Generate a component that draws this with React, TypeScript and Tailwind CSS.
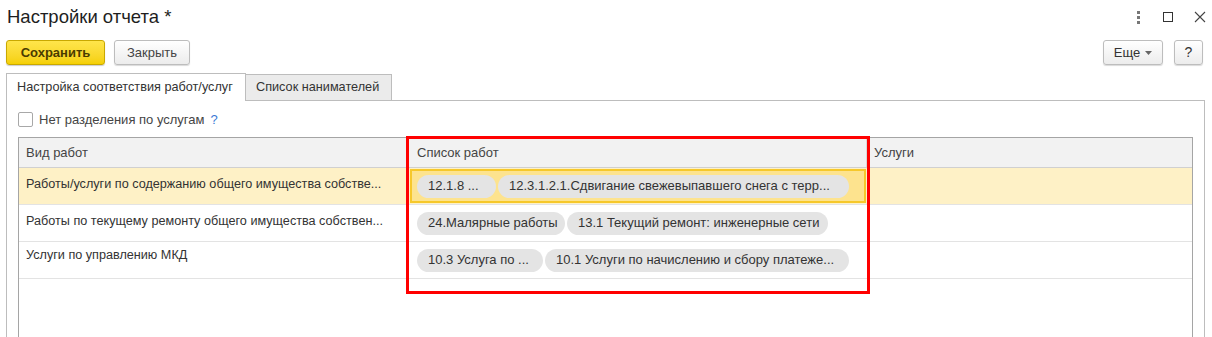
import React from "react";

const Chip = ({ children, w }: { children: React.ReactNode; w: number }) => (
  <div
    className="h-[23px] rounded-full bg-[#e4e4e4] flex items-center pl-[11px] pr-[8px] text-[13px] text-[#333] whitespace-nowrap overflow-hidden shrink-0"
    style={{ width: w }}
  >
    {children}
  </div>
);

export default function App() {
  return (
    <div className="relative w-[1212px] h-[337px] bg-white overflow-hidden text-[#333]" style={{ fontFamily: '"Liberation Sans", Arial, sans-serif' }}>
      {/* title bar */}
      <div className="flex items-center h-[34px] pl-[7px] pr-[4px]">
        <div className="text-[18.5px] text-[#1e1e1e] leading-none">Настройки отчета *</div>
        <div className="ml-auto flex items-center">
          <div className="flex flex-col gap-[2px] items-center w-[4px] mr-[23px]">
            <span className="w-[3px] h-[3px] bg-[#777]" />
            <span className="w-[3px] h-[3px] bg-[#777]" />
            <span className="w-[3px] h-[3px] bg-[#777]" />
          </div>
          <div className="w-[10px] h-[10px] border border-[#333] mr-[21px]" />
          <svg width="12" height="12" viewBox="0 0 12 12" className="mr-[2px]">
            <path d="M1 1L11 11M11 1L1 11" stroke="#444" strokeWidth="1.1" />
          </svg>
        </div>
      </div>
      {/* buttons */}
      <div className="flex items-center h-[25px] mt-[6px] px-[6px]">
        <div className="h-[25px] w-[99px] rounded-[3px] border border-[#c9a800] bg-gradient-to-b from-[#ffe54a] to-[#f5d000] flex items-center justify-center text-[13px] font-bold text-[#4a3b00] shadow-[0_1px_1px_rgba(0,0,0,0.2)]">
          Сохранить
        </div>
        <div className="ml-[9px] h-[25px] w-[76px] rounded-[3px] border border-[#bdbdbd] bg-gradient-to-b from-white to-[#ececec] flex items-center justify-center text-[13px] text-[#444] shadow-[0_1px_1px_rgba(0,0,0,0.15)]">
          Закрыть
        </div>
        <div className="ml-auto h-[25px] w-[60px] rounded-[3px] border border-[#bdbdbd] bg-gradient-to-b from-white to-[#ececec] flex items-center justify-center gap-[5px] text-[13px] text-[#333] shadow-[0_1px_1px_rgba(0,0,0,0.15)]">
          Еще
          <svg width="7" height="4" viewBox="0 0 7 4"><path d="M0 0H7L3.5 4Z" fill="#666" /></svg>
        </div>
        <div className="ml-[11px] mr-[3px] h-[25px] w-[29px] rounded-[3px] border border-[#bdbdbd] bg-gradient-to-b from-white to-[#ececec] flex items-center justify-center text-[14px] text-[#333] shadow-[0_1px_1px_rgba(0,0,0,0.15)]">
          ?
        </div>
      </div>
      {/* tabs */}
      <div className="flex items-end h-[28px] mt-[8px] px-[6px]">
        <div className="h-[28px] w-[240px] border border-[#bdbdbd] border-b-0 bg-white flex items-center px-[10px] text-[12.7px] text-[#333] whitespace-nowrap relative z-10">
          Настройка соответствия работ/услуг
        </div>
        <div className="h-[27px] w-[146px] border border-[#bdbdbd] border-l-0 bg-[#ebebeb] flex items-center px-[10px] text-[12.7px] text-[#333] whitespace-nowrap">
          Список нанимателей
        </div>
      </div>
      {/* panel */}
      <div className="ml-[6px] mr-[7px] -mt-px border border-[#bdbdbd] h-[260px] px-[11px]">
        <div className="flex items-center h-[36px] pt-[1px]">
          <div className="w-[15px] h-[15px] border border-[#a8a8a8] rounded-[2px] bg-white" />
          <span className="ml-[6px] text-[13px] text-[#444]">Нет разделения по услугам</span>
          <span className="ml-[6px] text-[13px] text-[#3a7bd5]">?</span>
        </div>
        <div className="border border-[#a5a5a5] h-[220px]">
          {/* header */}
          <div className="flex h-[30px] bg-[#f2f2f2] border-b border-[#d0d0d0] text-[13px] text-[#444]">
            <div className="w-[388px] flex items-center px-[7px] border-r border-[#e0e0e0]">Вид работ</div>
            <div className="w-[460px] flex items-center px-[10px] border-r border-[#d8d8d8]">Список работ</div>
            <div className="flex-1 flex items-center px-[7px]">Услуги</div>
          </div>
          {/* row 1 */}
          <div className="flex h-[37px] bg-[#fef1c6] border-b border-[#e3e3e3] text-[12.65px] text-[#333]">
            <div className="w-[388px] flex items-center px-[7px] pb-[3px] whitespace-nowrap">
              Работы/услуги по содержанию общего имущества собстве...
            </div>
            <div className="w-[460px] flex items-center pl-[3px] pr-[1px] py-[1px]">
              <div className="w-full h-full border-2 border-[#f6c82b] bg-[#fde38e] flex items-center gap-[2px] pl-[5px]">
                <Chip w={79}>12.1.8 ...</Chip>
                <Chip w={351}>12.3.1.2.1.Сдвигание свежевыпавшего снега с терр...</Chip>
              </div>
            </div>
            <div className="flex-1" />
          </div>
          {/* row 2 */}
          <div className="flex h-[37px] border-b border-[#e3e3e3] text-[12.65px] text-[#333]">
            <div className="w-[388px] flex items-center px-[7px] pb-[3px] whitespace-nowrap">
              Работы по текущему ремонту общего имущества собствен...
            </div>
            <div className="w-[460px] flex items-center gap-[2px] pl-[10px]">
              <Chip w={148}>24.Малярные работы</Chip>
              <Chip w={261}>13.1 Текущий ремонт: инженерные сети</Chip>
            </div>
            <div className="flex-1" />
          </div>
          {/* row 3 */}
          <div className="flex h-[37px] border-b border-[#e3e3e3] text-[12.65px] text-[#333]">
            <div className="w-[388px] flex items-center px-[7px] pb-[9px] whitespace-nowrap">Услуги по управлению МКД</div>
            <div className="w-[460px] flex items-center gap-[2px] pl-[10px]">
              <Chip w={126}>10.3 Услуга по ...</Chip>
              <Chip w={304}>10.1 Услуги по начислению и сбору платеже...</Chip>
            </div>
            <div className="flex-1" />
          </div>
        </div>
      </div>
      {/* red annotation */}
      <div className="absolute left-[406px] top-[136px] w-[464px] h-[158px] border-[3px] border-[#ff0000] pointer-events-none" />
    </div>
  );
}
